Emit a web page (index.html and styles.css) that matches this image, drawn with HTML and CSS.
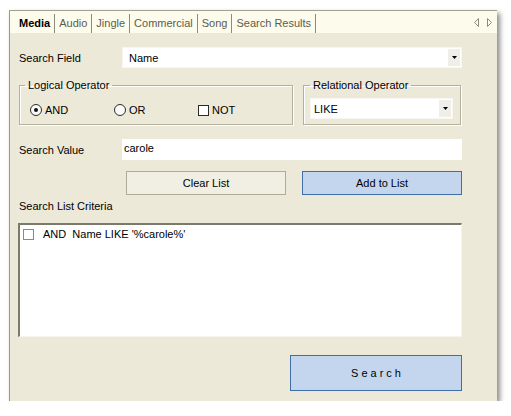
FILE: index.html
```html
<!DOCTYPE html>
<html lang="en">
<head>
 <meta charset="UTF-8">
 <title>Media Search</title>
 <link rel="stylesheet" href="styles.css">
</head>
<body>
 <div class="window">
  <div class="tab-strip">
   <span class="tab active">Media</span>
   <span class="tab">Audio</span>
   <span class="tab">Jingle</span>
   <span class="tab">Commercial</span>
   <span class="tab">Song</span>
   <span class="tab">Search Results</span>
   <span class="tab-arrows">
    <svg width="18" height="10" viewBox="0 0 18 10">
     <polygon points="4.5,0.5 4.5,8.5 0.5,4.5" fill="none" stroke="#8e8b7b"/>
     <polygon points="13.5,0.5 13.5,8.5 17.5,4.5" fill="none" stroke="#8e8b7b"/>
    </svg>
   </span>
  </div>

  <div class="panel">
   <div class="field-row">
    <span class="field-label">Search Field</span>
    <div class="select select-wide">
     <span class="select-text">Name</span>
     <span class="drop"><svg width="5" height="3" viewBox="0 0 5 3"><polygon points="0,0 5,0 2.5,3" fill="#000"/></svg></span>
    </div>
   </div>

   <div class="groups">
    <fieldset class="group logical">
     <legend>Logical Operator</legend>
     <div class="options">
      <span class="option"><span class="radio checked"></span>AND</span>
      <span class="option"><span class="radio"></span>OR</span>
      <span class="option"><span class="check"></span>NOT</span>
     </div>
    </fieldset>
    <fieldset class="group relational">
     <legend>Relational Operator</legend>
     <div class="select select-small">
      <span class="select-text">LIKE</span>
      <span class="drop"><svg width="5" height="3" viewBox="0 0 5 3"><polygon points="0,0 5,0 2.5,3" fill="#000"/></svg></span>
     </div>
    </fieldset>
   </div>

   <div class="field-row value-row">
    <span class="field-label">Search Value</span>
    <div class="text-input">carole</div>
   </div>

   <div class="button-row">
    <button class="btn">Clear List</button>
    <button class="btn btn-blue">Add to List</button>
   </div>

   <div class="list-label">Search List Criteria</div>
   <div class="criteria-list">
    <div class="criteria-item"><span class="check"></span><span class="criteria-text">AND  Name LIKE '%carole%'</span></div>
   </div>

   <div class="search-row">
    <button class="btn btn-blue search-btn">Search</button>
   </div>
  </div>
 </div>
</body>
</html>
```

FILE: styles.css
```css
body {
 margin: 0;
 background-color: #fff;
 font-family: "Liberation Sans", Arial, sans-serif;
 font-size: 11px;
 color: #000;
}

.window {
 margin: 10px 0 0 9px;
 width: 487px;
 height: 390px;
 border-top: 1px solid #a3a08e;
 border-left: 1px solid #6f9ee0;
 background-color: #ece9d8;
 box-shadow: 3px 3px 5px rgba(0, 0, 0, 0.45);
 display: flex;
 flex-direction: column;
}

.tab-strip {
 height: 22px;
 background-color: #fcfbec;
 display: flex;
 align-items: center;
 padding: 0 5px 0 8px;
}

.tab {
 padding: 0 4px;
 line-height: 19px;
 color: #5e5b4d;
 border-right: 1px solid #8e8b7b;
 margin-top: 2px;
}

.tab.active {
 font-weight: bold;
 color: #000;
 padding-left: 1px;
}

.tab-arrows {
 margin-left: auto;
 display: flex;
 margin-top: 2px;
}

.panel {
 flex-grow: 1;
 padding: 14px 35px 0 9px;
}

.field-row {
 display: flex;
 align-items: center;
 height: 21px;
}

.field-label {
 width: 103px;
 flex-shrink: 0;
}

.select {
 background-color: #fff;
 height: 21px;
 display: flex;
 align-items: center;
 box-sizing: border-box;
 border: 1px solid #f7f6f0;
}

.select-wide {
 flex-grow: 1;
 padding-left: 6px;
}

.select-small {
 padding-left: 3px;
}

.select-text {
 flex-grow: 1;
}

.drop {
 width: 12px;
 height: 17px;
 margin-right: 1px;
 background-color: #efeee8;
 display: flex;
 align-items: center;
 justify-content: center;
}

.groups {
 display: flex;
 gap: 10px;
 margin-top: 11px;
}

.group {
 margin: 0;
 height: 46px;
 box-sizing: border-box;
 border: 1px solid #b3b09f;
 box-shadow: inset 1px 1px 0 #fff, 1px 1px 0 #fff;
 min-inline-size: 0;
}

.group legend {
 padding: 0 3px;
 line-height: 13px;
}

.logical {
 width: 274px;
 padding: 0 4px 0 5px;
}

.relational {
 flex-grow: 1;
 padding: 0 7px 0 6px;
 margin-right: 1px;
}

.options {
 display: grid;
 grid-template-columns: 84px 84px auto;
 margin-top: 12px;
 margin-left: 5px;
}

.option {
 display: flex;
 align-items: center;
 gap: 3px;
}

.radio {
 width: 10px;
 height: 10px;
 border: 1px solid #2b2b2b;
 border-radius: 50%;
 background-color: #fafaf6;
 display: flex;
 align-items: center;
 justify-content: center;
}

.radio.checked::after {
 content: "";
 width: 4px;
 height: 4px;
 border-radius: 50%;
 background-color: #111;
}

.check {
 width: 9px;
 height: 9px;
 border: 1px solid #2b2b2b;
 background-color: #fff;
 display: inline-block;
 flex-shrink: 0;
}

.relational .select {
 margin-top: 6px;
}

.value-row {
 margin-top: 14px;
}

.text-input {
 flex-grow: 1;
 height: 21px;
 line-height: 19px;
 background-color: #fff;
 padding-left: 2px;
 box-sizing: border-box;
}

.button-row {
 display: flex;
 gap: 16px;
 margin: 11px 0 0 107px;
}

.btn {
 font-family: inherit;
 font-size: 11px;
 color: #000;
 width: 160px;
 height: 24px;
 border: 1px solid #aeab98;
 background-color: #f1efe4;
 padding: 0;
}

.btn-blue {
 background-color: #c4d6ee;
 border-color: #3f6ea8;
}

.list-label {
 margin-top: 5px;
 line-height: 13px;
}

.criteria-list {
 margin: 10px 0 0 -1px;
 width: 444px;
 height: 114px;
 box-sizing: border-box;
 background-color: #fff;
 border-top: 2px solid #7b796c;
 border-left: 2px solid #7b796c;
 border-right: 1px solid #f5f4ee;
 border-bottom: 1px solid #f5f4ee;
}

.criteria-item {
 display: flex;
 align-items: center;
 gap: 9px;
 padding: 3px 0 0 3px;
}

.criteria-item .check {
 border-color: #8e8b7b;
}

.criteria-text {
 white-space: pre;
}

.search-row {
 display: flex;
 justify-content: flex-end;
 margin-top: 18px;
}

.search-btn {
 width: 172px;
 height: 36px;
 letter-spacing: 3px;
 padding-left: 3px;
}
```
